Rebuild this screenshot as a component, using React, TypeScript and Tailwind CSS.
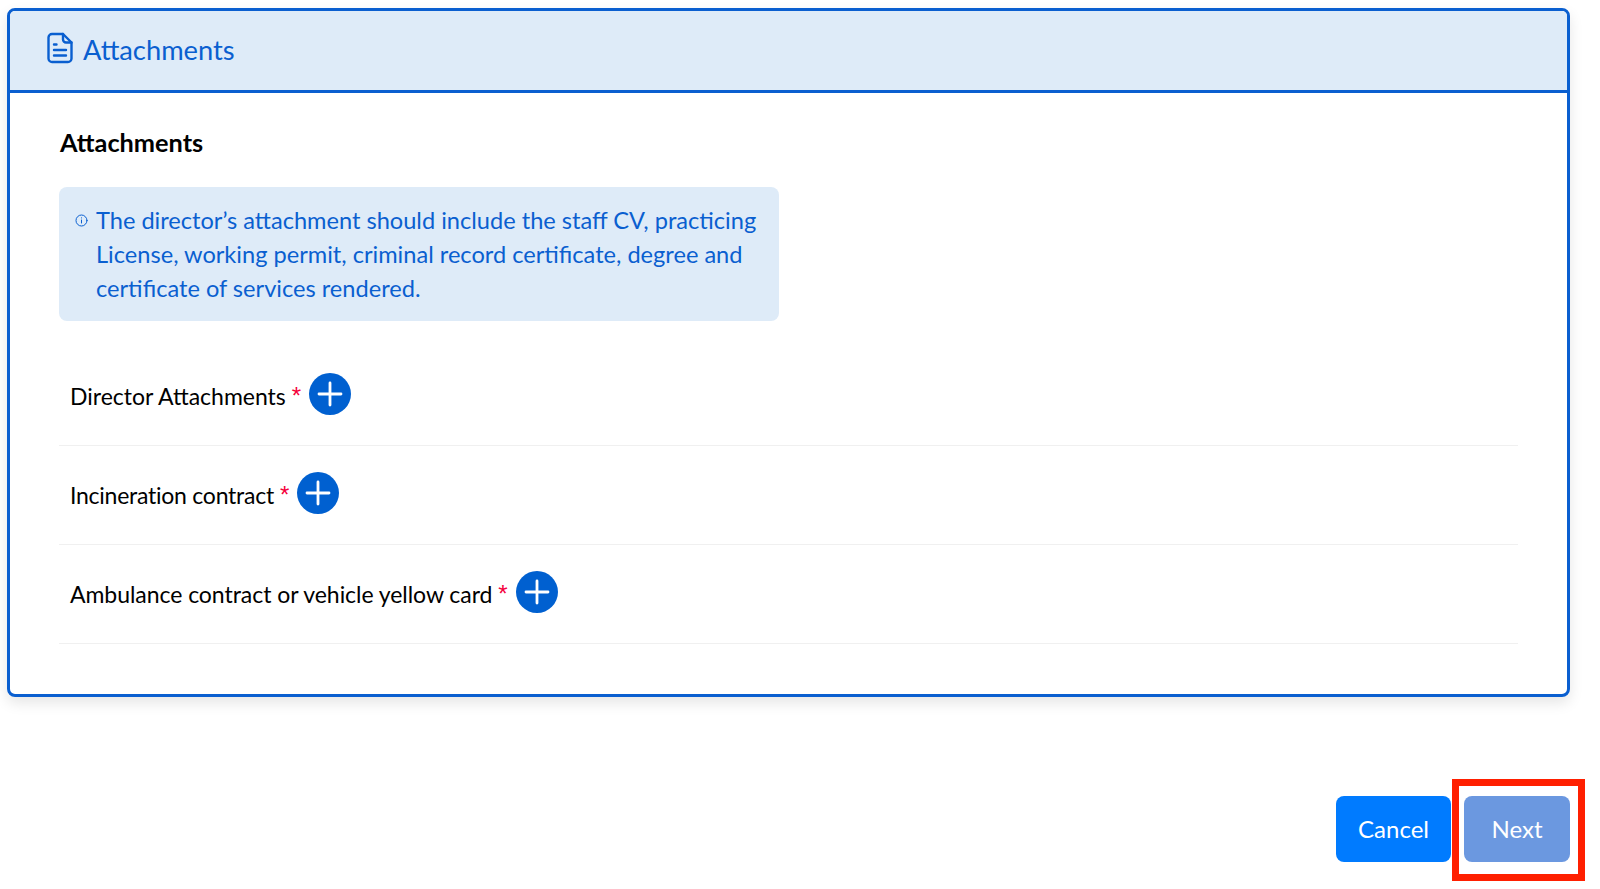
import React from 'react';

const attachmentRows = [
    { label: 'Director Attachments', tracking: 'tracking-normal' },
    { label: 'Incineration contract', tracking: 'tracking-[-0.25px]' },
    { label: 'Ambulance contract or vehicle yellow card', tracking: 'tracking-[-0.05px]' },
];

const PlusButton = () => (
    <button className="-mt-1 flex h-[42px] w-[42px] shrink-0 items-center justify-center rounded-full bg-[#0060d0]">
        <svg width="26" height="26" viewBox="0 0 26 26" fill="none" stroke="#fff" strokeWidth="2.8" strokeLinecap="round">
            <path d="M13 2v22M2 13h22" />
        </svg>
    </button>
);

const DocIcon = () => (
    <svg width="26" height="32" viewBox="0 0 26 32" fill="none" stroke="#0a5fd0" strokeWidth="2.4" strokeLinecap="round" strokeLinejoin="round" className="-mt-[5px]">
        <path d="M16 2H5a3.5 3.5 0 0 0-3.5 3.500v21A3.500 3.500 0 0 0 5 30h16a3.500 3.500 0 0 0 3.500-3.500V10.500z" />
        <path d="M16 2v5.500a3 3 0 0 0 3 3h5.500" />
        <path d="M7 12.500h2.500M7 18h12M7 23.500h12" />
    </svg>
);

const InfoIcon = () => (
    <svg width="13" height="13" viewBox="0 0 13 13" fill="none" stroke="#0a5fd0" strokeWidth="1" strokeLinecap="round" className="mt-[11px] shrink-0">
        <circle cx="6.500" cy="6.500" r="5.500" />
        <path d="M6.500 6v3M6.500 3.800v.2" />
    </svg>
);

const App: React.FC = () => {
    return (
        <div className="relative h-[889px] w-[1600px] overflow-hidden bg-white pl-[7px] pt-2 font-['Lato',sans-serif]">
            <div className="h-[689px] w-[1563px] overflow-hidden rounded-lg border-[3px] border-[#0a5fd0] shadow-[0_6px_14px_rgba(0,0,0,0.1)]">
                <div className="flex h-[82px] items-center gap-[10px] border-b-[3px] border-[#0a5fd0] bg-[#deebf8] pl-[37px] text-[27.300px] text-[#0a5fd0]">
                    <DocIcon />
                    <span className="mt-[-1px]">Attachments</span>
                </div>

                <div className="px-[49px] pt-[31px]">
                    <h2 className="ml-px h-[36px] text-[25.300px] font-bold leading-9 text-black">Attachments</h2>

                    <div className="mt-[27px] flex h-[134px] w-[720px] gap-2 rounded-lg bg-[#deebf8] pl-[16px] pt-[16px] text-[#0a5fd0]">
                        <InfoIcon />
                        <p className="whitespace-nowrap text-[23.600px] leading-[34px]">
                            The director’s attachment should include the staff CV, practicing
                            <br />
                            License, working permit, criminal record certificate, degree and
                            <br />
                            certificate of services rendered.
                        </p>
                    </div>

                    <div className="mt-[26px]">
                        {attachmentRows.map(({ label, tracking }) => (
                            <div key={label} className="flex h-[99px] items-center border-b border-[#f0f0f0] pb-[1px] pl-[11px]">
                                <span className={`mt-[2px] text-[23px] text-black ${tracking}`}>{label}</span>
                                <span className="ml-[6px] mr-[8px] font-['Liberation_Sans',sans-serif] text-[24px] leading-none text-[#f5003c]">*</span>
                                <PlusButton />
                            </div>
                        ))}
                    </div>
                </div>
            </div>

            <div className="mt-[99px] flex justify-end gap-[13px] pr-[30px]">
                <button className="h-[66px] w-[115px] rounded-lg bg-[#007bff] pb-[1px] text-[24px] text-white">Cancel</button>
                <button className="h-[66px] w-[106px] rounded-lg bg-[#6b98e0] pb-[1px] text-[24px] text-white">Next</button>
            </div>

            {/* red highlight drawn over the Next button */}
            <div className="absolute left-[1452px] top-[779px] h-[102px] w-[133px] border-[7px] border-[#ff1f00]" />
        </div>
    );
};

export default App;
